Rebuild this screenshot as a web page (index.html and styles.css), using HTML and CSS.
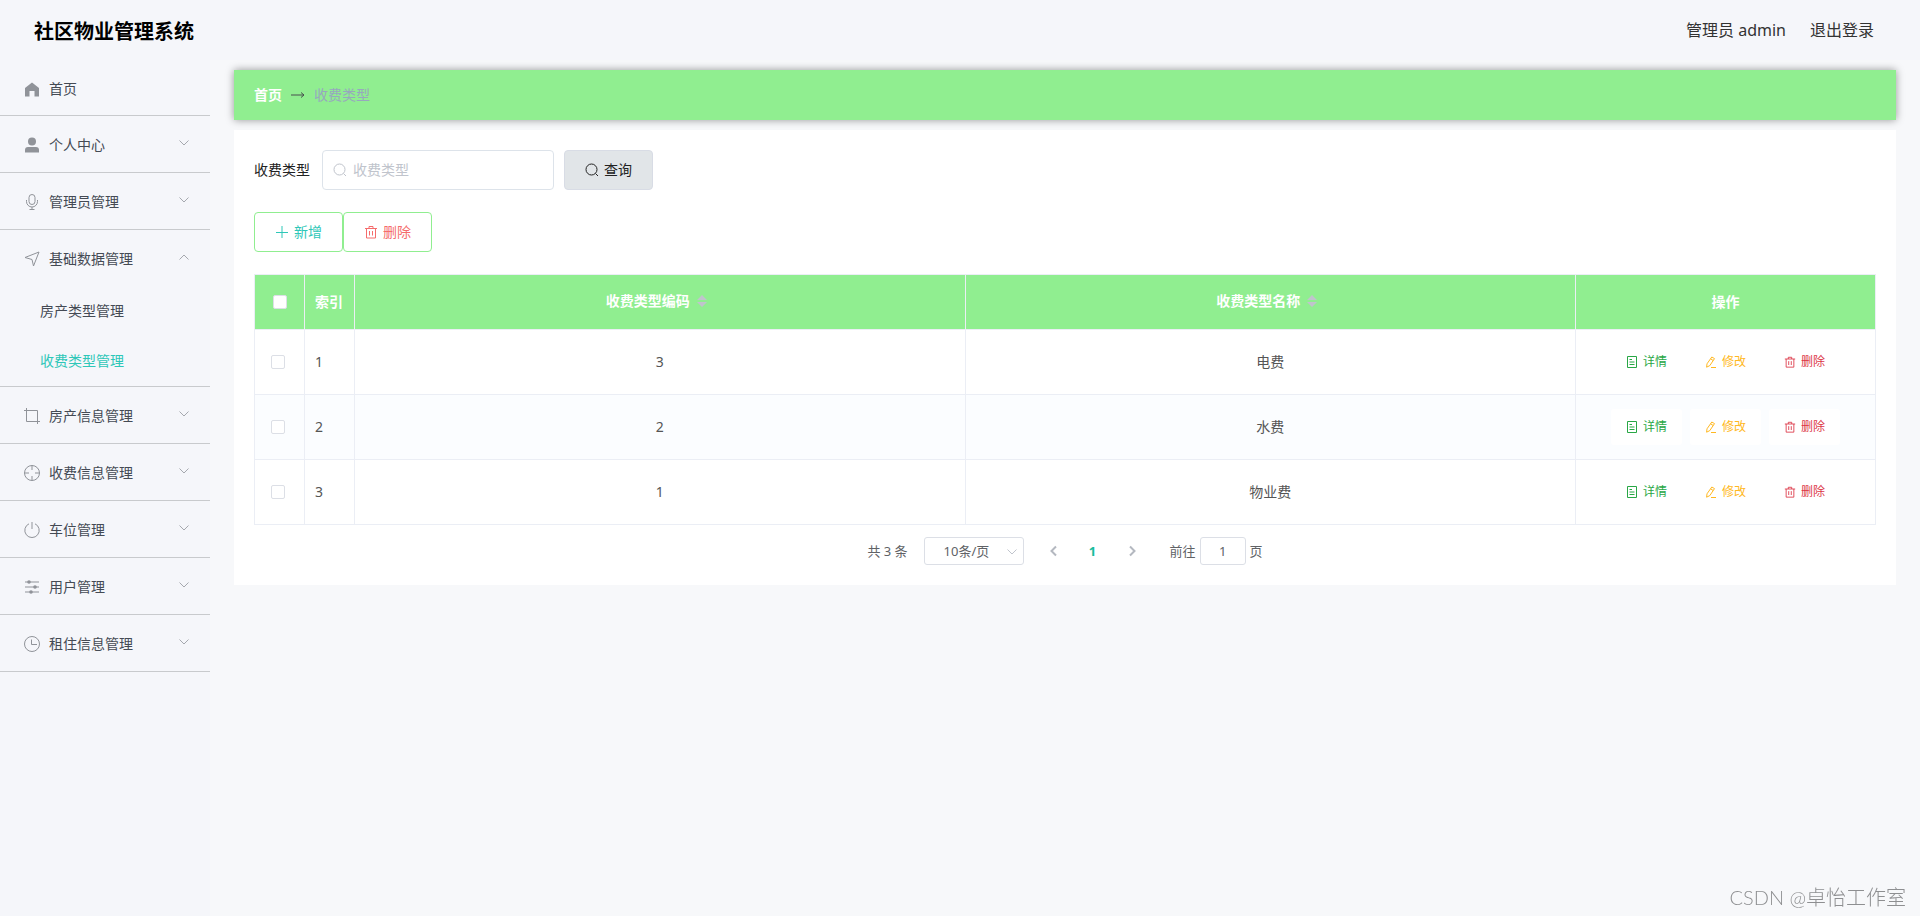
FILE: index.html
```html
<!DOCTYPE html>
<html lang="zh-CN">
<head>
<meta charset="utf-8">
<title>社区物业管理系统</title>
<link rel="stylesheet" href="styles.css">
</head>
<body>
<svg class="sprite" aria-hidden="true">
  <symbol id="down" viewBox="0 0 12 12"><path d="M1.5 3.5 6 8l4.500-4.500"/></symbol>
  <symbol id="search" viewBox="0 0 14 14"><circle cx="6.500" cy="6.500" r="5.500"/><path d="m10.500 10.500 2.500 2.500"/></symbol>
  <symbol id="trash" viewBox="0 0 14 14"><path d="M1 3.500h12M2.500 3.500v9.500h9V3.500M5 3.500v-2h4v2M5.500 6v4.500M8.500 6v4.500"/></symbol>
  <symbol id="doc" viewBox="0 0 12 12"><path d="M1.500.500h9v11h-9zM3.500 3.500h2.500M3.500 6h5M3.500 8.500h5"/></symbol>
  <symbol id="edit" viewBox="0 0 12 12"><path d="M6.800 1 9.500 2.600 4.800 9.600 1.600 11.200 2 7.800zM5.600 2.800l2.600 1.700M6 11.500h5"/></symbol>
</svg>
<header class="topbar">
  <h1 class="brand">社区物业管理系统</h1>
  <div class="account"><span>管理员 admin</span><a href="#">退出登录</a></div>
</header>
<div class="layout">
  <nav class="sidebar">
    <a class="menu-item home" href="#"><svg class="menu-icon solid" viewBox="0 0 16 16"><path d="M8 1.500 15 7v8.500h-4.500V10h-5v5.500H1V7z"/></svg><span>首页</span></a>
    <a class="menu-item" href="#"><svg class="menu-icon solid" viewBox="0 0 16 16"><circle cx="8" cy="4.500" r="4"/><path d="M1 15.500V13q0-3 3-3h8q3 0 3 3v2.500z"/></svg><span>个人中心</span><svg class="chevron"><use href="#down"/></svg></a>
    <a class="menu-item" href="#"><svg class="menu-icon" viewBox="0 0 16 16"><rect x="5" y=".5" width="6" height="10" rx="3"/><path d="M2.500 6v1.500a5.500 5.500 0 0 0 11 0V6M8 13v2.500M5.500 15.500h5"/></svg><span>管理员管理</span><svg class="chevron"><use href="#down"/></svg></a>
    <div class="menu-group">
      <a class="menu-title" href="#"><svg class="menu-icon" viewBox="0 0 16 16"><path d="M1 6.500 15 1 9.500 15 8 8.500z"/></svg><span>基础数据管理</span><svg class="chevron open"><use href="#down"/></svg></a>
      <a class="sub-item" href="#">房产类型管理</a>
      <a class="sub-item active" href="#">收费类型管理</a>
    </div>
    <a class="menu-item" href="#"><svg class="menu-icon" viewBox="0 0 16 16"><path d="M0 2.500h13.500V16M2.500 0v13.500H16"/></svg><span>房产信息管理</span><svg class="chevron"><use href="#down"/></svg></a>
    <a class="menu-item" href="#"><svg class="menu-icon" viewBox="0 0 16 16"><circle cx="8" cy="8" r="7.500"/><path d="M8 .5V5M8 11v4.500M.5 8H5M11 8h4.500"/></svg><span>收费信息管理</span><svg class="chevron"><use href="#down"/></svg></a>
    <a class="menu-item" href="#"><svg class="menu-icon" viewBox="0 0 16 16"><path d="M5 1.800a7.200 7.200 0 1 0 6 0M8 0V7"/></svg><span>车位管理</span><svg class="chevron"><use href="#down"/></svg></a>
    <a class="menu-item" href="#"><svg class="menu-icon" viewBox="0 0 16 16"><path d="M1 3h14M1 8h14M1 13h14"/><g class="dot"><circle cx="5" cy="3" r="1.800"/><circle cx="11" cy="8" r="1.800"/><circle cx="7" cy="13" r="1.800"/></g></svg><span>用户管理</span><svg class="chevron"><use href="#down"/></svg></a>
    <a class="menu-item" href="#"><svg class="menu-icon" viewBox="0 0 16 16"><circle cx="8" cy="8" r="7.500"/><path d="M7.500 3.500v5H13"/></svg><span>租住信息管理</span><svg class="chevron"><use href="#down"/></svg></a>
  </nav>
  <main class="content">
    <div class="breadcrumb"><a href="#">首页</a><svg class="arrow" viewBox="0 0 14 10"><path d="M0 5h13M10 2.500 13 5l-3 2.500"/></svg><span>收费类型</span></div>
    <section class="card">
      <form class="filters">
        <label for="type">收费类型</label>
        <div class="search-box"><svg class="icon"><use href="#search"/></svg><input id="type" type="text" placeholder="收费类型"></div>
        <button class="btn query" type="button"><svg class="icon"><use href="#search"/></svg>查询</button>
      </form>
      <div class="tools">
        <button class="btn add" type="button"><svg class="icon" viewBox="0 0 14 14"><path d="M1 7.500h12M7 1v12"/></svg>新增</button>
        <button class="btn remove" type="button"><svg class="icon"><use href="#trash"/></svg>删除</button>
      </div>
      <table class="grid">
        <colgroup><col class="narrow"><col class="narrow"><col><col><col class="ops"></colgroup>
        <thead><tr>
          <th><input class="check" type="checkbox" aria-label="全选"></th>
          <th class="left">索引</th>
          <th><span class="sortable">收费类型编码<svg class="sort" viewBox="0 0 10 14"><path d="M0 6 5 1l5 5zM0 8h10l-5 5z"/></svg></span></th>
          <th><span class="sortable">收费类型名称<svg class="sort" viewBox="0 0 10 14"><path d="M0 6 5 1l5 5zM0 8h10l-5 5z"/></svg></span></th>
          <th>操作</th>
        </tr></thead>
        <tbody>
          <tr><td class="pick"><input class="check" type="checkbox" aria-label="选择 1"></td><td class="left">1</td><td>3</td><td>电费</td><td><div class="actions"><button class="op detail" type="button"><svg><use href="#doc"/></svg>详情</button><button class="op edit" type="button"><svg><use href="#edit"/></svg>修改</button><button class="op del" type="button"><svg><use href="#trash"/></svg>删除</button></div></td></tr>
          <tr><td class="pick"><input class="check" type="checkbox" aria-label="选择 2"></td><td class="left">2</td><td>2</td><td>水费</td><td><div class="actions"><button class="op detail" type="button"><svg><use href="#doc"/></svg>详情</button><button class="op edit" type="button"><svg><use href="#edit"/></svg>修改</button><button class="op del" type="button"><svg><use href="#trash"/></svg>删除</button></div></td></tr>
          <tr><td class="pick"><input class="check" type="checkbox" aria-label="选择 3"></td><td class="left">3</td><td>1</td><td>物业费</td><td><div class="actions"><button class="op detail" type="button"><svg><use href="#doc"/></svg>详情</button><button class="op edit" type="button"><svg><use href="#edit"/></svg>修改</button><button class="op del" type="button"><svg><use href="#trash"/></svg>删除</button></div></td></tr>
        </tbody>
      </table>
      <div class="pager">
        <span>共 3 条</span>
        <div class="size"><select aria-label="每页条数"><option>10条/页</option></select><svg class="caret"><use href="#down"/></svg></div>
        <div class="pages">
          <button type="button" aria-label="上一页"><svg viewBox="0 0 12 12"><path d="M8 1.500 3.500 6 8 10.500"/></svg></button>
          <button class="current" type="button">1</button>
          <button type="button" aria-label="下一页"><svg viewBox="0 0 12 12"><path d="M4 1.500 8.500 6 4 10.500"/></svg></button>
        </div>
        <div class="jump"><label for="page">前往</label><input id="page" type="text" value="1"><span>页</span></div>
      </div>
    </section>
  </main>
</div>
<div class="watermark">CSDN @卓怡工作室</div>
</body>
</html>
```
FILE: styles.css
```css
* { box-sizing: border-box; }
body {
  margin: 0;
  min-height: 100vh;
  display: flex;
  flex-direction: column;
  background: #f7f8fa;
  color: #333;
  font: 14px/20px "Noto Sans", "Noto Sans CJK SC", sans-serif;
}
a { color: inherit; text-decoration: none; }
button, input, select { font: inherit; color: inherit; margin: 0; }
svg { fill: none; stroke: currentColor; flex: none; }
.sprite { position: absolute; width: 0; height: 0; }

.topbar {
  height: 60px;
  padding: 0 46px 0 34px;
  display: flex;
  align-items: center;
  justify-content: space-between;
  background: #f5f6fa;
}
.brand { margin: 0; padding-top: 4px; font-size: 20px; line-height: 28px; color: #000; }
.account { display: flex; gap: 24px; font-size: 16px; }

.layout { display: flex; flex: 1; }
.sidebar { width: 210px; flex: none; background: #f5f6fa; color: #444a54; }
.menu-item, .menu-title {
  display: flex;
  align-items: center;
  height: 56px;
  padding: 2px 20px 0 24px;
}
.menu-item, .menu-group { border-bottom: 1px solid #c8cacd; }
.menu-item { height: 57px; }
.menu-item.home { height: 56px; }
.menu-icon { width: 16px; height: 16px; margin-right: 9px; color: #909399; }
.menu-icon.solid, .dot { fill: currentColor; stroke: none; }
.chevron { width: 12px; height: 12px; margin-left: auto; margin-bottom: 4px; color: #a5a8ae; }
.chevron.open { transform: rotate(180deg); }
.sub-item { display: flex; align-items: center; height: 50px; padding-left: 40px; }
.sub-item.active { color: #2ec7b8; }

.content { flex: 1; min-width: 0; padding: 10px 24px; }
.breadcrumb {
  display: flex;
  align-items: center;
  height: 50px;
  padding: 0 20px;
  background: #90ee90;
  box-shadow: 0 0 8px rgba(0, 0, 0, .4);
  color: #97a8be;
}
.breadcrumb a { color: #fff; font-weight: 700; }
.arrow { width: 14px; height: 10px; margin: 0 9px; color: #48504f; }

.card { margin-top: 10px; padding: 20px 20px 0; background: #fff; }
.filters { display: flex; align-items: center; gap: 10px; color: #222; }
.search-box {
  display: flex;
  align-items: center;
  width: 232px;
  height: 40px;
  margin-left: 2px;
  padding: 0 10px;
  border: 1px solid #dde3ea;
  border-radius: 4px;
  color: #c0c4cc;
}
.icon { width: 14px; height: 14px; margin-right: 5px; }
.search-box .icon { margin-right: 6px; }
.search-box input { width: 100%; min-width: 0; padding: 0; border: 0; outline: 0; background: none; color: #333; }
.search-box input::placeholder { color: #c0c4cc; }
.btn {
  display: flex;
  align-items: center;
  justify-content: center;
  height: 40px;
  padding: 0 20px;
  border: 1px solid #90ee90;
  border-radius: 4px;
  background: #fff;
}
.btn.query { border-color: #d8dce5; background: #e1e5e8; }
.tools { display: flex; margin: 22px 0; }
.add { color: #2ec7b8; }
.remove { color: #f56c6c; }

.grid {
  width: 100%;
  table-layout: fixed;
  border-spacing: 0;
  border: solid #ebeef5;
  border-width: 1px 0 0 1px;
  color: #555;
}
.narrow { width: 50px; }
.ops { width: 300px; }
.grid th, .grid td {
  padding: 0 10px;
  border: solid #ebeef5;
  border-width: 0 1px 1px 0;
  text-align: center;
}
.grid th { height: 55px; background: #90ee90; color: #fff; font-weight: 700; }
.grid td { height: 65px; }
.grid .left { text-align: left; white-space: nowrap; }
.grid .pick { padding-right: 14px; }
.grid tbody tr:nth-child(even) { background: #fbfdff; }
.sortable { display: inline-flex; align-items: center; gap: 7px; padding: 0 7px 2px 0; }
.sort { width: 10px; height: 14px; fill: #c0c4cc; stroke: none; }
.check {
  appearance: none;
  display: block;
  width: 14px;
  height: 14px;
  margin: 0 auto;
  border: 1px solid #dcdfe6;
  border-radius: 2px;
  background: #fff;
}
.actions { display: flex; justify-content: center; gap: 8px; }
.op {
  display: flex;
  align-items: center;
  gap: 5px;
  height: 36px;
  padding: 0 15px;
  border: 0;
  border-radius: 3px;
  background: #fff;
  font-size: 12px;
}
.op svg { width: 12px; height: 12px; }
.detail { color: #28a745; }
.edit { color: #ffb821; }
.del { color: #dc3545; }

.pager {
  display: flex;
  align-items: center;
  justify-content: center;
  height: 60px;
  padding-bottom: 8px;
  font-size: 13px;
  color: #606266;
}
.size { position: relative; margin-left: 16px; }
.size select {
  appearance: none;
  display: block;
  width: 100px;
  height: 28px;
  padding: 0 19px;
  border: 1px solid #dcdfe6;
  border-radius: 3px;
  background: #fff;
}
.caret { position: absolute; right: 6px; top: 9px; width: 12px; height: 12px; color: #c0c4cc; pointer-events: none; }
.pages { display: flex; gap: 9px; margin: 0 23px 0 15px; }
.pages button {
  display: flex;
  align-items: center;
  justify-content: center;
  width: 30px;
  height: 28px;
  padding: 0;
  border: 0;
  background: none;
  color: #b4b8c0;
}
.pages svg { width: 12px; height: 12px; stroke-width: 2; }
.pages .current { color: #18bc9c; font-weight: 700; }
.jump { display: flex; align-items: center; gap: 4px; }
.jump input { width: 46px; height: 28px; padding: 0; border: 1px solid #dcdfe6; border-radius: 3px; text-align: center; background: #fff; }

.watermark {
  position: fixed;
  right: 14px;
  bottom: 4px;
  font-size: 20px;
  line-height: 30px;
  font-weight: 300;
  color: #8e8f91;
  font-family: Lato, "Noto Sans CJK SC", sans-serif;
}
```
